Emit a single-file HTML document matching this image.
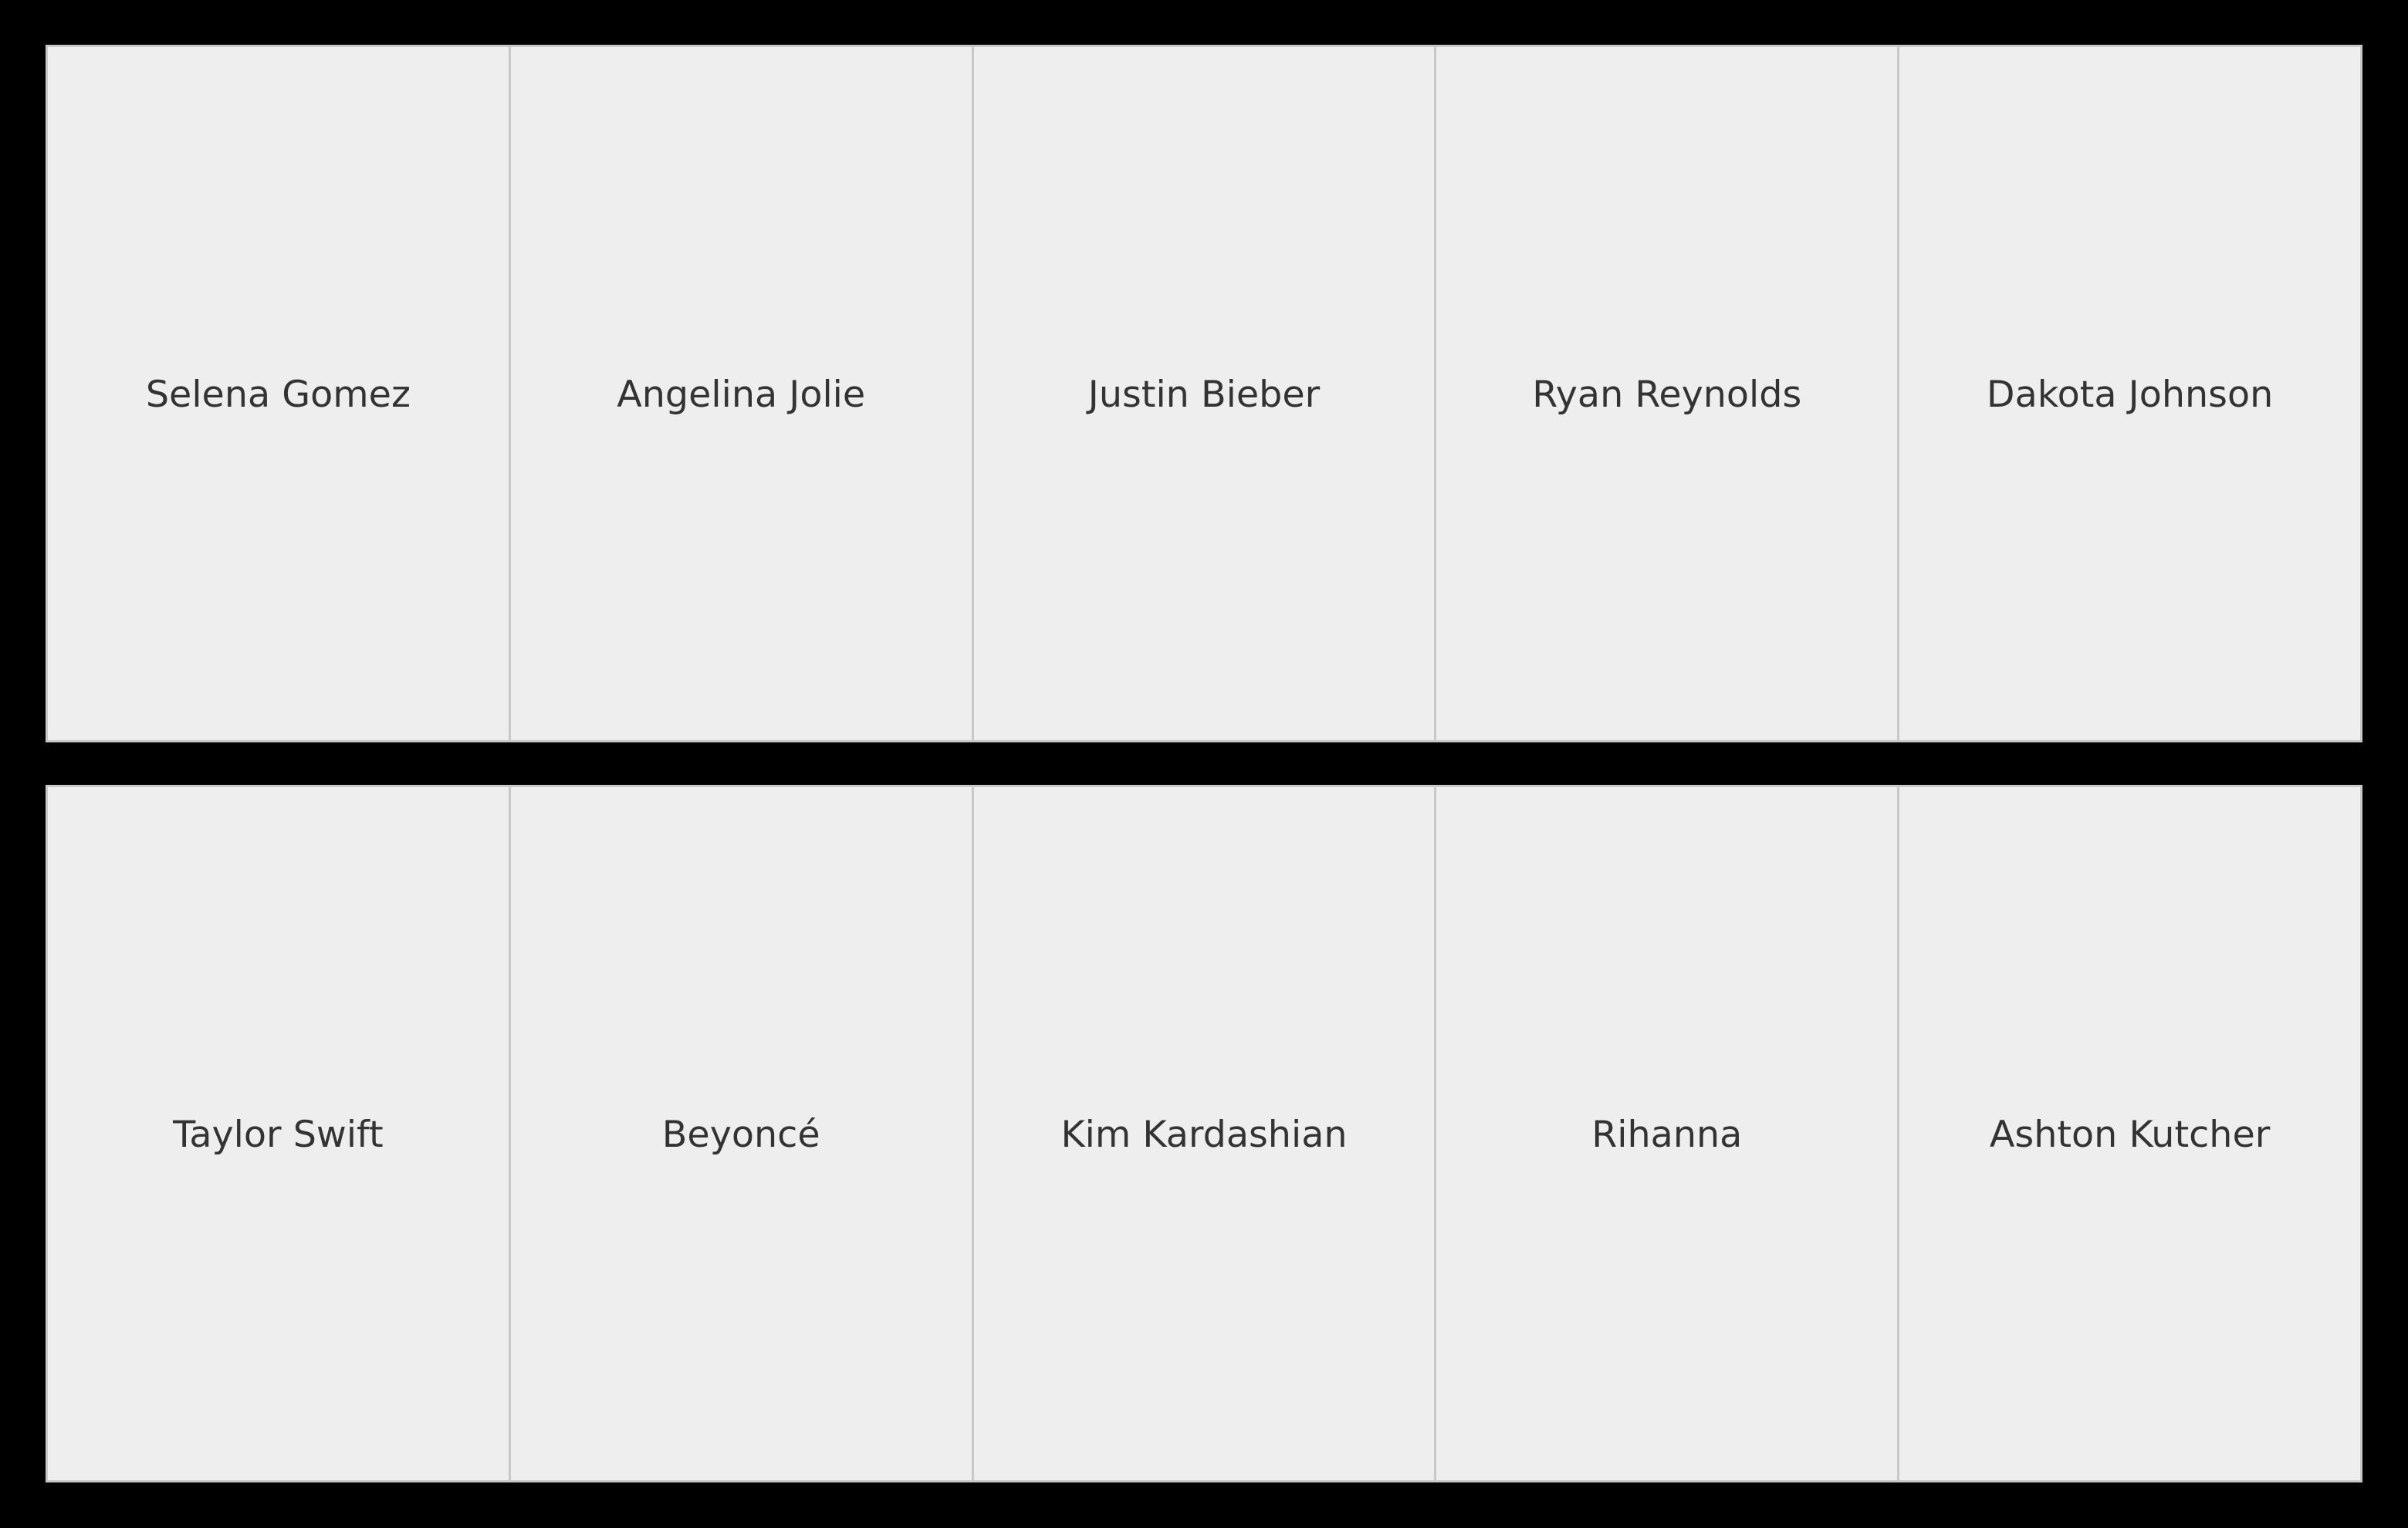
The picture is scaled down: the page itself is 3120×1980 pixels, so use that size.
<!DOCTYPE html>
<html><head><meta charset="utf-8"><style>
html,body{margin:0;padding:0;background:#000;width:3120px;height:1980px;overflow:hidden}
.row{position:absolute;left:59px;width:3002px;height:904px;display:flex;box-sizing:border-box;border:3px solid #c8c8c8;background:#eee}
.cell{flex:1;display:flex;align-items:center;justify-content:center;border-left:3px solid #c8c8c8;font-family:"DejaVu Sans","Liberation Sans",sans-serif;font-size:47.6px;color:#333;padding-top:3px}
.cell:first-child{border-left:none}
</style></head><body>
<div class="row" style="top:58px">
<div class="cell">Selena Gomez</div><div class="cell">Angelina Jolie</div><div class="cell">Justin Bieber</div><div class="cell">Ryan Reynolds</div><div class="cell">Dakota Johnson</div>
</div>
<div class="row" style="top:1017px">
<div class="cell">Taylor Swift</div><div class="cell">Beyoncé</div><div class="cell">Kim Kardashian</div><div class="cell">Rihanna</div><div class="cell">Ashton Kutcher</div>
</div>
</body></html>
